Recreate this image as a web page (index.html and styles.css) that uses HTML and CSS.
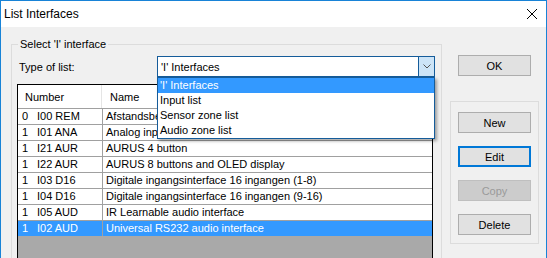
FILE: index.html
```html
<!DOCTYPE html>
<html>
<head>
<meta charset="utf-8">
<link rel="stylesheet" href="styles.css">
</head>
<body>
<div class="window">
  <div class="titlebar">
    <span class="title">List Interfaces</span>
    <svg class="close" width="10" height="10" viewBox="0 0 10 10"><path d="M0 0 L10 10 M10 0 L0 10" stroke="#000" stroke-width="1" fill="none"/></svg>
  </div>
  <div class="client">
    <div class="group main-group">
      <div class="group-label">Select 'I' interface</div>
      <div class="type-row">
        <span class="type-label">Type of list:</span>
        <div class="combo">
          <span class="combo-text">'I' Interfaces</span>
          <span class="combo-btn"><svg width="8" height="5" viewBox="0 0 8 5"><path d="M0.5 0.5 L4 4 L7.5 0.5" stroke="#555" stroke-width="1" fill="none"/></svg></span>
          <ul class="dropdown">
            <li class="sel">'I' Interfaces</li>
            <li>Input list</li>
            <li>Sensor zone list</li>
            <li>Audio zone list</li>
          </ul>
        </div>
      </div>
      <div class="listview">
        <div class="lv-header">
          <div class="hc c1">Number</div>
          <div class="hc c2">Name</div>
        </div>
        <div class="lv-row"><div class="cell c1"><span class="num">0</span>I00 REM</div><div class="cell c2">Afstandsbediening</div></div>
        <div class="lv-row"><div class="cell c1"><span class="num">1</span>I01 ANA</div><div class="cell c2">Analog input interface</div></div>
        <div class="lv-row"><div class="cell c1"><span class="num">1</span>I21 AUR</div><div class="cell c2">AURUS 4 button</div></div>
        <div class="lv-row"><div class="cell c1"><span class="num">1</span>I22 AUR</div><div class="cell c2">AURUS 8 buttons and OLED display</div></div>
        <div class="lv-row"><div class="cell c1"><span class="num">1</span>I03 D16</div><div class="cell c2">Digitale ingangsinterface 16 ingangen (1-8)</div></div>
        <div class="lv-row"><div class="cell c1"><span class="num">1</span>I04 D16</div><div class="cell c2">Digitale ingangsinterface 16 ingangen (9-16)</div></div>
        <div class="lv-row"><div class="cell c1"><span class="num">1</span>I05 AUD</div><div class="cell c2">IR Learnable audio interface</div></div>
        <div class="lv-row sel"><div class="cell c1"><span class="num">1</span>I02 AUD</div><div class="cell c2">Universal RS232 audio interface</div></div>
      </div>
    </div>
    <div class="side">
      <button class="btn ok">OK</button>
      <div class="group side-group">
        <button class="btn">New</button>
        <button class="btn edit">Edit</button>
        <button class="btn" disabled>Copy</button>
        <button class="btn">Delete</button>
      </div>
    </div>
  </div>
</div>
</body>
</html>
```

FILE: styles.css
```css
html, body {
  margin: 0;
  padding: 0;
  overflow: hidden;
  background: #f0f0f0;
}
body {
  font-family: "Liberation Sans", Arial, sans-serif;
  font-size: 11px;
  color: #000;
}
.window {
  width: 547px;
  height: 258px;
  box-sizing: border-box;
  border: 1px solid #1883d7;
  border-bottom: 0;
  background: #f0f0f0;
  display: flex;
  flex-direction: column;
  overflow: hidden;
}
.titlebar {
  height: 26px;
  flex: 0 0 26px;
  background: #fff;
  display: flex;
  align-items: center;
  justify-content: space-between;
  padding-left: 3px;
  padding-right: 9px;
  font-size: 12px;
}
.close {
  display: block;
}
.client {
  display: flex;
  align-items: flex-start;
  padding-left: 10px;
  flex: 1;
  min-height: 0;
}
.group {
  border: 1px solid #dcdcdc;
  box-sizing: border-box;
}
.main-group {
  margin-top: 17px;
  width: 431px;
  height: 230px;
  border-bottom: 0;
}
.group-label {
  margin: -7px 0 0 6px;
  padding: 0 2px;
  width: fit-content;
  height: 13px;
  line-height: 13px;
  background: #f0f0f0;
}
.type-row {
  display: flex;
  align-items: center;
  margin-top: 5px;
  padding-left: 7px;
}
.type-label {
  width: 138px;
}
.combo {
  position: relative;
  width: 278px;
  height: 21px;
  box-sizing: border-box;
  border: 1px solid #155c9a;
  background: #fff;
  display: flex;
  align-items: center;
}
.combo-text {
  flex: 1;
  padding-left: 3px;
}
.combo-btn {
  width: 15px;
  height: 19px;
  border-left: 1px solid #155c9a;
  background: #cce4f7;
  display: flex;
  align-items: center;
  justify-content: center;
}
.combo-btn svg {
  display: block;
}
.dropdown {
  position: absolute;
  left: -1px;
  top: 20px;
  width: 278px;
  box-sizing: border-box;
  margin: 0;
  padding: 0;
  list-style: none;
  border: 1px solid #155c9a;
  background: #fff;
  box-shadow: 2px 2px 3px rgba(0, 0, 0, 0.35);
  z-index: 10;
}
.dropdown li {
  height: 15px;
  line-height: 15px;
  padding-left: 2px;
  white-space: nowrap;
}
.dropdown li.sel {
  background: #3399ff;
  color: #fff;
}
.listview {
  margin: 7px 0 0 5px;
  width: 416px;
  height: 190px;
  box-sizing: border-box;
  border: 1px solid #000;
  border-bottom: 0;
  background: #a9a9a9;
  overflow: hidden;
}
.lv-header {
  display: flex;
  height: 23px;
  background: #fff;
}
.hc {
  display: flex;
  align-items: center;
  box-sizing: border-box;
  height: 100%;
}
.hc.c1 {
  width: 84px;
  padding-left: 7px;
  border-right: 1px solid #e5e5e5;
}
.hc.c2 {
  flex: 1;
  padding-left: 8px;
}
.lv-row {
  display: flex;
  height: 16px;
  box-sizing: border-box;
  border-top: 1px solid #a0a0a0;
  background: #fff;
  line-height: 15px;
  white-space: nowrap;
}
.lv-row.sel {
  background: #3399ff;
  color: #fff;
}
.cell.c1 {
  width: 85px;
  box-sizing: border-box;
  padding-left: 4px;
  border-right: 1px solid #a0a0a0;
}
.cell.c2 {
  flex: 1;
  padding-left: 3px;
  overflow: hidden;
}
.num {
  display: inline-block;
  width: 15px;
}
.side {
  margin-left: 8px;
  width: 89px;
  display: flex;
  flex-direction: column;
}
.btn {
  width: 73px;
  height: 21px;
  box-sizing: border-box;
  border: 1px solid #adadad;
  background: #e1e1e1;
  font-family: "Liberation Sans", Arial, sans-serif;
  font-size: 11px;
  color: #000;
  padding: 0;
  margin: 0;
}
.btn.ok {
  margin: 28px 0 0 8px;
}
.btn.edit {
  border: 2px solid #0078d7;
}
.btn:disabled {
  background: #cccccc;
  border-color: #bfbfbf;
  color: #9a9a9a;
}
.side-group {
  margin-top: 25px;
  width: 89px;
  height: 143px;
  display: flex;
  flex-direction: column;
  gap: 13px;
  padding: 10px 7px 0 7px;
}
```
